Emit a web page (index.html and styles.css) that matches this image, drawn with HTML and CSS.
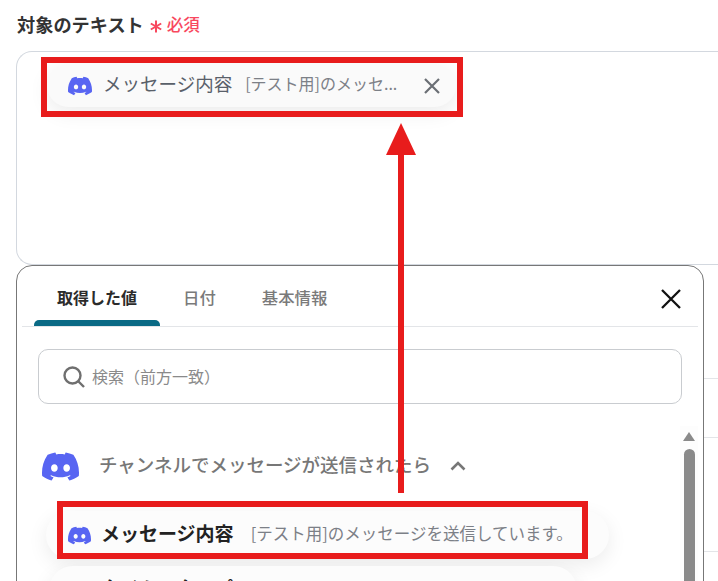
FILE: index.html
```html
<!DOCTYPE html>
<html lang="ja">
<head>
  <meta charset="UTF-8">
  <meta name="viewport" content="width=device-width, initial-scale=1">
  <title>対象のテキスト</title>
  <link rel="stylesheet" href="styles.css">
</head>
<body>
  <svg class="defs" width="0" height="0">
    <symbol id="discord" viewBox="0 0 24 24">
      <path d="M20.317 4.3698a19.7913 19.7913 0 00-4.8851-1.5152.0741.0741 0 00-.0785.0371c-.211.3753-.4447.8648-.6083 1.2495-1.8447-.2762-3.68-.2762-5.4868 0-.1636-.3933-.4058-.8742-.6177-1.2495a.077.077 0 00-.0785-.037 19.7363 19.7363 0 00-4.8852 1.515.0699.0699 0 00-.0321.0277C.5334 9.0458-.319 13.5799.0992 18.0578a.0824.0824 0 00.0312.0561c2.0528 1.5076 4.0413 2.4228 5.9929 3.0294a.0777.0777 0 00.0842-.0276c.4616-.6304.8731-1.2952 1.226-1.9942a.076.076 0 00-.0416-.1057c-.6528-.2476-1.2743-.5495-1.8722-.8923a.077.077 0 01-.0076-.1277c.1258-.0943.2517-.1923.3718-.2914a.0743.0743 0 01.0776-.0105c3.9278 1.7933 8.18 1.7933 12.0614 0a.0739.0739 0 01.0785.0095c.1202.099.246.1981.3728.2924a.077.077 0 01-.0066.1276 12.2986 12.2986 0 01-1.873.8914.0766.0766 0 00-.0407.1067c.3604.698.7719 1.3628 1.225 1.9932a.076.076 0 00.0842.0286c1.961-.6067 3.9495-1.5219 6.0023-3.0294a.077.077 0 00.0313-.0552c.5004-5.177-.8382-9.6739-3.5485-13.6604a.061.061 0 00-.0312-.0286zM8.02 15.3312c-1.1825 0-2.1569-1.0857-2.1569-2.419 0-1.3332.9555-2.4189 2.157-2.4189 1.2108 0 2.1757 1.0952 2.1568 2.419 0 1.3332-.9555 2.4189-2.1569 2.4189zm7.9748 0c-1.1825 0-2.1569-1.0857-2.1569-2.419 0-1.3332.9554-2.4189 2.1569-2.4189 1.2108 0 2.1757 1.0952 2.1568 2.419 0 1.3332-.946 2.4189-2.1568 2.4189Z"/>
    </symbol>
  </svg>

  <div class="field-label">
    <span class="label-text">対象のテキスト</span>
    <svg class="asterisk" viewBox="0 0 12 12"><path d="M6 0v12M.8 3l10.4 6M11.2 3L.8 9"/></svg>
    <span class="required">必須</span>
  </div>

  <div class="text-area">
    <div class="chip">
      <svg class="icon-small"><use href="#discord"/></svg>
      <span class="chip-name">メッセージ内容</span>
      <span class="chip-value">[テスト用]のメッセ...</span>
      <svg class="chip-close" viewBox="0 0 16 16"><path d="M1 1l14 14M15 1L1 15"/></svg>
    </div>
  </div>

  <div class="lower">
    <div class="panel">
      <div class="tabs">
        <div class="tab active">取得した値</div>
        <div class="tab">日付</div>
        <div class="tab">基本情報</div>
        <svg class="panel-close" viewBox="0 0 20 20"><path d="M1 1l18 18M19 1L1 19"/></svg>
      </div>

      <div class="search">
        <svg class="search-icon" viewBox="0 0 22 22"><circle cx="9.5" cy="9.5" r="8"/><path d="M15.5 15.5l5.5 5.5"/></svg>
        <span class="search-text">検索（前方一致）</span>
      </div>

      <div class="group-head">
        <svg class="icon-large"><use href="#discord"/></svg>
        <span class="group-title">チャンネルでメッセージが送信されたら</span>
        <svg class="chevron" viewBox="0 0 16 10"><path d="M1.5 8.5L8 2l6.5 6.5"/></svg>
      </div>

      <div class="value-row">
        <svg class="icon-small"><use href="#discord"/></svg>
        <span class="value-name">メッセージ内容</span>
        <span class="value-text">[テスト用]のメッセージを送信しています。</span>
      </div>
      <div class="value-row second">
        <svg class="icon-small"><use href="#discord"/></svg>
        <span class="value-name">タイムスタンプ</span>
      </div>

      <div class="scrollbar">
        <div class="scroll-up"></div>
        <div class="scroll-thumb"></div>
      </div>
    </div>

    <div class="behind">
      <div class="behind-row first"></div>
      <div class="behind-row second"></div>
      <div class="behind-row third"></div>
    </div>
  </div>

  <!-- red annotation -->
  <div class="mark mark-top"></div>
  <div class="mark mark-bottom"></div>
  <div class="arrow-line"></div>
  <div class="arrow-head"></div>
</body>
</html>
```

FILE: styles.css
```css
* {
  box-sizing: border-box;
  margin: 0;
  padding: 0;
}

html, body {
  height: 581px;
  overflow: hidden;
}

body {
  position: relative;
  background: #fff;
  font-family: "Noto Sans CJK JP", "Noto Sans", sans-serif;
  color: #333;
}

.defs {
  position: absolute;
}

/* label */
.field-label {
  display: flex;
  align-items: center;
  height: 51px;
  padding: 0 0 3px 17px;
}

.label-text {
  font-size: 18.2px;
  font-weight: 700;
  color: #333;
}

.asterisk {
  width: 12px;
  height: 13px;
  margin: 5px 0 0 6px;
  fill: none;
  stroke: #f8485e;
  stroke-width: 2;
}

.required {
  margin-left: 5px;
  font-size: 16.5px;
  font-weight: 500;
  color: #f8485e;
}

/* text area with chip */
.text-area {
  height: 214px;
  margin-left: 16px;
  padding: 12px 0 0 30px;
  border: 1px solid #d3d8df;
  border-right: 0;
  border-radius: 16px 0 0 16px;
}

.chip {
  display: flex;
  align-items: center;
  width: 409px;
  height: 43px;
  padding: 0 14px 0 21px;
  background: #fafafa;
  border-radius: 22px;
  box-shadow: 0 6px 20px rgba(0, 0, 0, 0.08);
}

.icon-small {
  flex: none;
  width: 24px;
  height: 24px;
  fill: #5865f2;
}

.chip-name {
  margin-left: 11px;
  padding-bottom: 5px;
  font-size: 18.5px;
  color: #596069;
  white-space: nowrap;
}

.chip-value {
  margin-left: 13px;
  padding-bottom: 5px;
  font-size: 16px;
  color: #7c8087;
  white-space: nowrap;
}

.chip-close {
  flex: none;
  width: 16px;
  height: 16px;
  margin-left: auto;
  margin-right: 2px;
  fill: none;
  stroke: #6b6f75;
  stroke-width: 2.2;
}

/* lower panel */
.lower {
  display: flex;
  height: 400px;
}

.panel {
  position: relative;
  flex: none;
  width: 688px;
  height: 420px;
  margin-left: 16px;
  padding: 0 5px;
  background: #fff;
  border: 1px solid #777;
  border-radius: 16px 16px 0 0;
}

.tabs {
  display: flex;
  align-items: stretch;
  height: 61px;
  padding-left: 12px;
  border-bottom: 1px solid #e3e5e8;
}

.tab {
  position: relative;
  padding: 19px 23px 0;
  font-size: 16.4px;
  line-height: 24px;
  font-weight: 500;
  color: #7a7a7a;
}

.tab.active {
  font-size: 16px;
  font-weight: 700;
  color: #2b2b2b;
}

.tab.active::after {
  content: '';
  position: absolute;
  left: 0;
  right: 0;
  bottom: 0;
  height: 6px;
  background: #0a6a85;
  border-radius: 5px 5px 0 0;
}

.panel-close {
  width: 20px;
  height: 20px;
  margin: 23px 0 0 auto;
  margin-right: 17px;
  fill: none;
  stroke: #111;
  stroke-width: 2.3;
}

.search {
  display: flex;
  align-items: center;
  gap: 7px;
  width: 644px;
  height: 55px;
  margin: 22px 0 0 16px;
  padding-left: 24px;
  font-size: 16px;
  color: #8a8a8a;
  border: 1px solid #c9ccd0;
  border-radius: 10px;
}

.search-text {
  padding-bottom: 2px;
}

.search-icon {
  width: 22px;
  height: 22px;
  fill: none;
  stroke: #6f6f6f;
  stroke-width: 2.4;
}

.group-head {
  display: flex;
  align-items: center;
  height: 40px;
  margin: 42px 0 0 20px;
}

.icon-large {
  width: 37px;
  height: 37px;
  fill: #5865f2;
}

.group-title {
  margin-left: 20px;
  padding-bottom: 4px;
  font-size: 18.5px;
  font-weight: 500;
  color: #777;
}

.chevron {
  width: 16px;
  height: 10px;
  margin-left: 19px;
  fill: none;
  stroke: #777;
  stroke-width: 2.6;
}

.value-row {
  display: flex;
  align-items: center;
  width: 563px;
  height: 48px;
  margin: 25px 0 0 24px;
  padding-left: 22px;
  background: #fcfcfc;
  border-radius: 24px;
  box-shadow: 0 6px 20px rgba(0, 0, 0, 0.08);
}

.value-row .icon-small {
  width: 23px;
  height: 23px;
}

.value-row.second {
  width: 528px;
  margin-top: 7px;
  margin-left: 27px;
  padding-left: 19px;
}

.value-name {
  margin-left: 10px;
  padding-bottom: 5px;
  font-size: 19px;
  font-weight: 700;
  color: #222;
  white-space: nowrap;
}

.value-text {
  margin-left: 17px;
  padding-bottom: 5px;
  font-size: 16.5px;
  color: #7c8087;
  white-space: nowrap;
}

/* scrollbar */
.scrollbar {
  position: absolute;
  top: 160px;
  right: 5px;
  bottom: 0;
  width: 18px;
  background: #fdfdfd;
}

.scroll-up {
  width: 0;
  height: 0;
  margin: 6px 0 0 3px;
  border-left: 6px solid transparent;
  border-right: 6px solid transparent;
  border-bottom: 9px solid #8a8a8a;
}

.scroll-thumb {
  width: 11px;
  height: 300px;
  margin: 8px 0 0 4px;
  background: #8a8a8a;
  border-radius: 6px;
}

/* what shows right of the panel */
.behind {
  flex: 1;
}

.behind-row {
  border-bottom: 1px solid #e3e5e8;
}

.behind-row.first {
  height: 114px;
}

.behind-row.second {
  height: 59px;
}

.behind-row.third {
  height: 114px;
}

/* red annotation */
.mark {
  position: absolute;
  border: 6px solid #e81c1c;
}

.mark-top {
  left: 41px;
  top: 57px;
  width: 422px;
  height: 60px;
}

.mark-bottom {
  left: 57px;
  top: 501px;
  width: 531px;
  height: 58px;
}

.arrow-line {
  position: absolute;
  left: 398px;
  top: 150px;
  width: 6px;
  height: 343px;
  background: #e81c1c;
}

.arrow-head {
  position: absolute;
  left: 386px;
  top: 123px;
  width: 0;
  height: 0;
  border-left: 15.5px solid transparent;
  border-right: 15.5px solid transparent;
  border-bottom: 32px solid #e81c1c;
}
```
